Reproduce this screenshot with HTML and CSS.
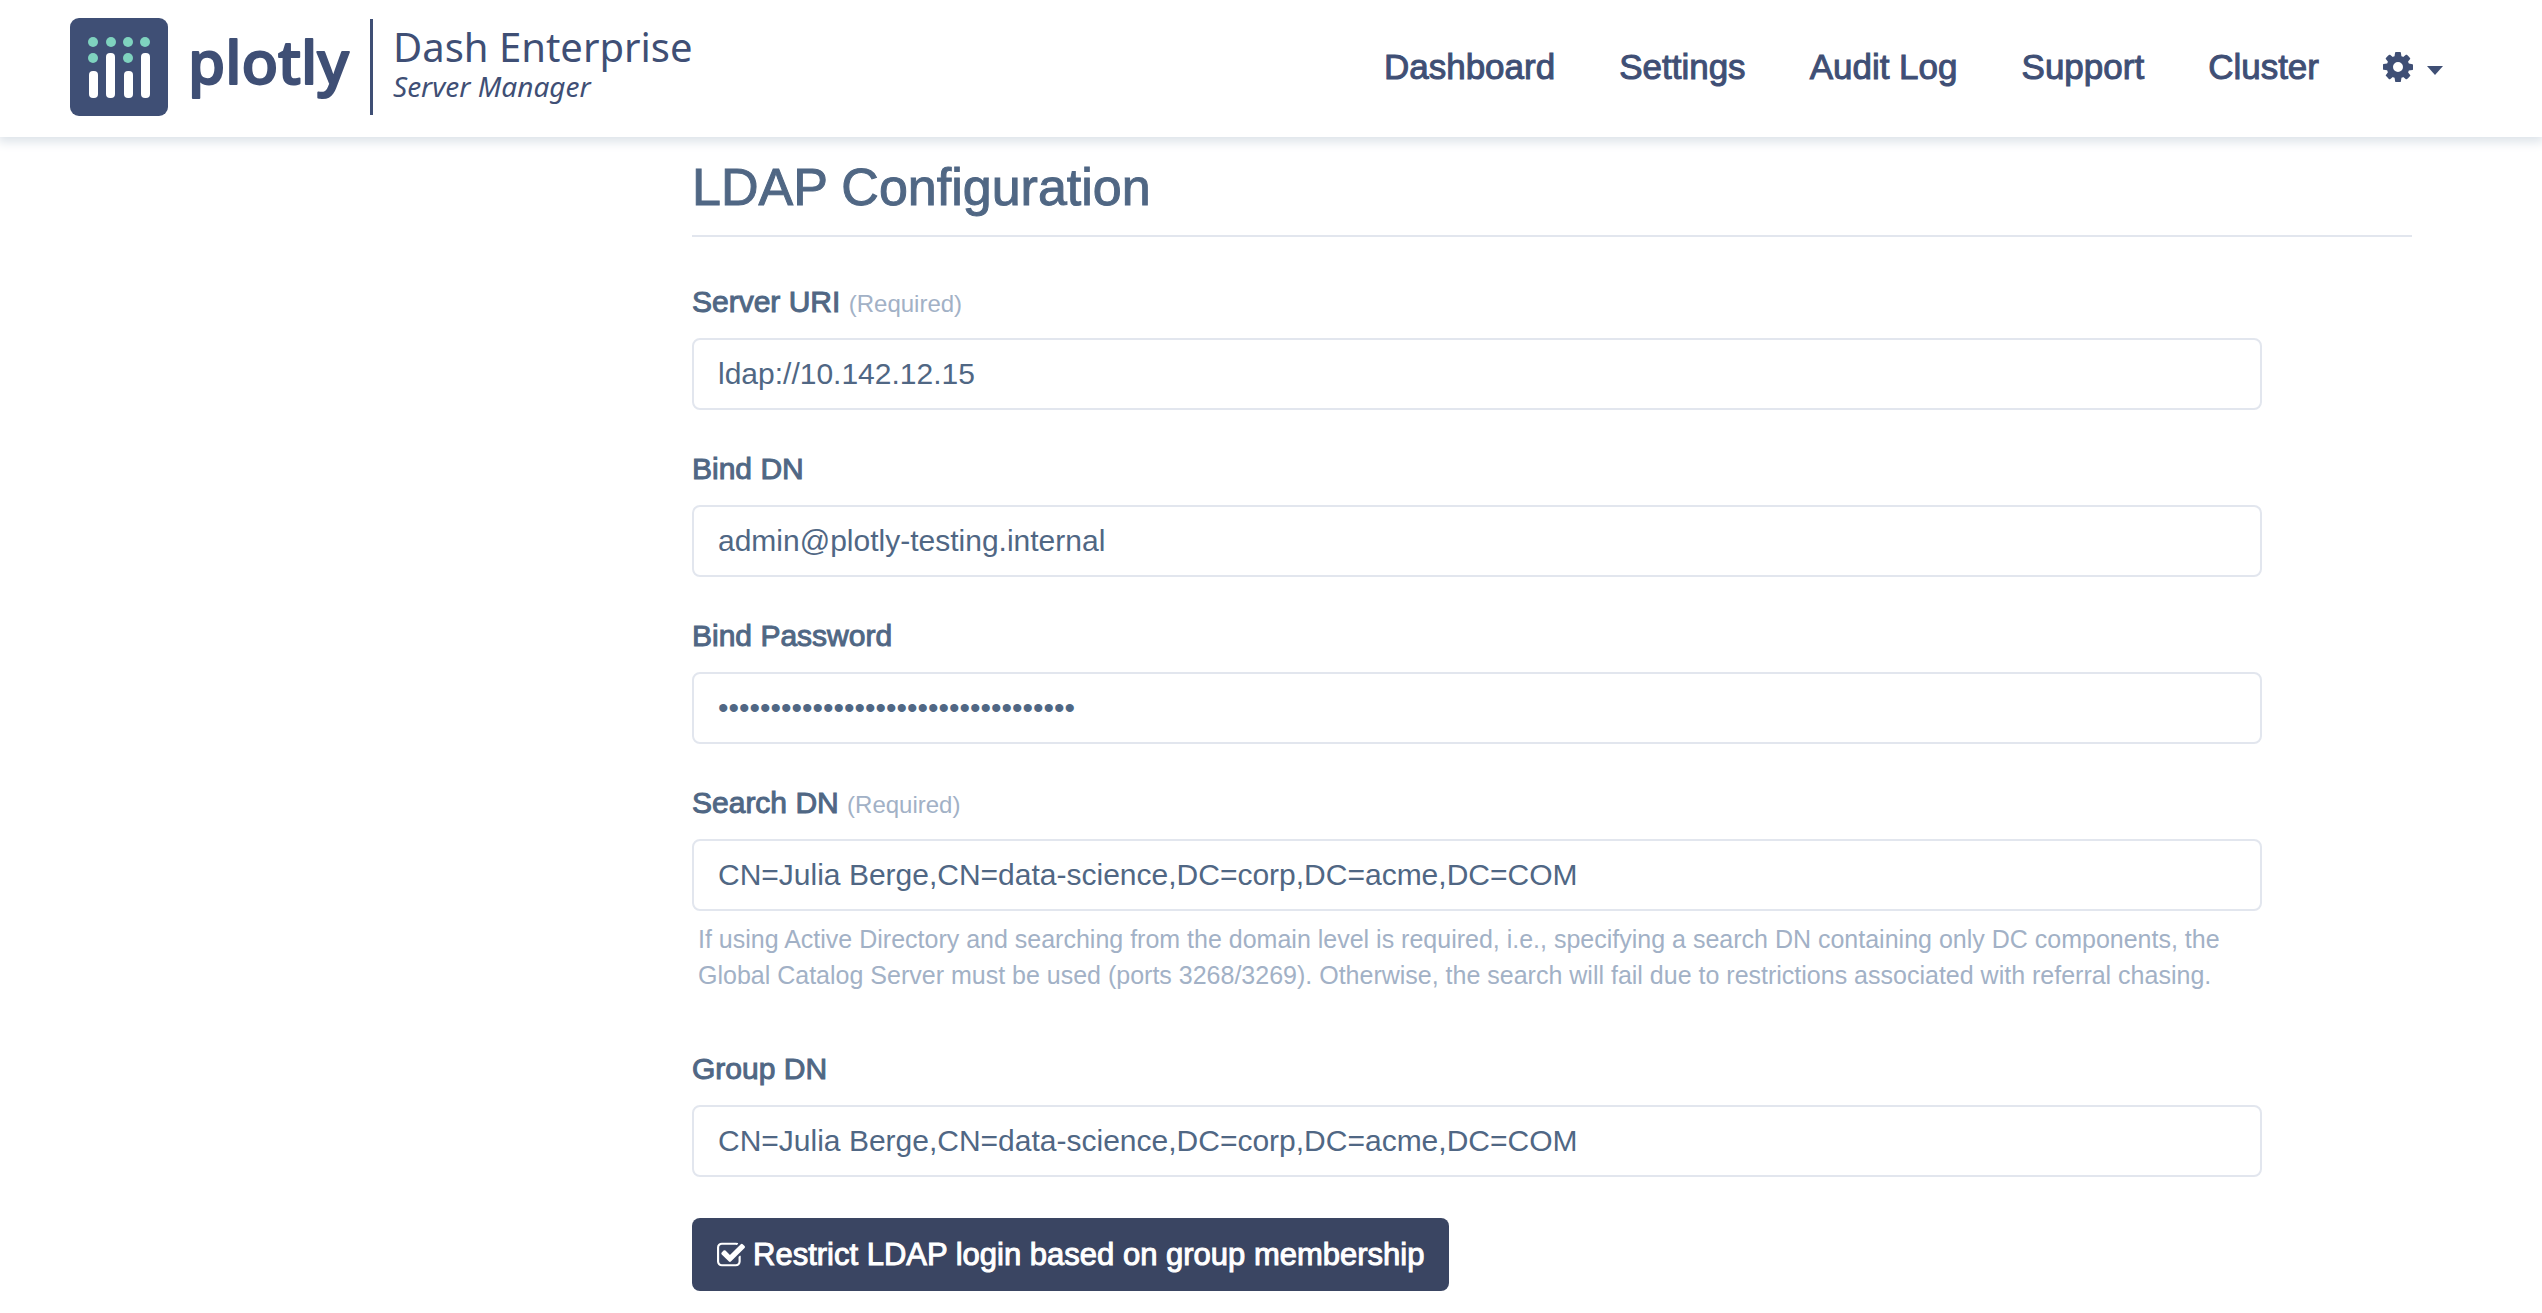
FILE: index.html
```html
<!DOCTYPE html>
<html lang="en">
<head>
    <meta charset="UTF-8">
    <meta name="viewport" content="width=device-width, initial-scale=1.0">
    <title>Dash Enterprise Server Manager</title>
    <link rel="stylesheet" href="styles.css">
</head>
<body>
    <header class="navbar">
        <a href="#" class="brand">
            <svg class="brand-mark" viewBox="0 0 98 98" aria-hidden="true">
                <rect width="98" height="98" rx="9" fill="#3f4f75"/>
                <g fill="#7fd3bf">
                    <circle cx="23" cy="24" r="5"/>
                    <circle cx="41" cy="24" r="5"/>
                    <circle cx="58" cy="24" r="5"/>
                    <circle cx="75" cy="24" r="5"/>
                    <circle cx="23" cy="40" r="5"/>
                    <circle cx="58" cy="40" r="5"/>
                </g>
                <g fill="#fff">
                    <rect x="19" y="53" width="9" height="27" rx="4"/>
                    <rect x="36" y="35" width="9" height="45" rx="4"/>
                    <rect x="54" y="53" width="9" height="27" rx="4"/>
                    <rect x="71" y="35" width="9" height="45" rx="4"/>
                </g>
            </svg>
            <svg class="brand-word" viewBox="0 0 164 98">
                <text x="0" y="66">plotly</text>
            </svg>
            <span class="brand-product">
                <span class="brand-name">Dash Enterprise</span>
                <span class="brand-sub">Server Manager</span>
            </span>
        </a>
        <nav class="nav">
            <a href="#">Dashboard</a>
            <a href="#">Settings</a>
            <a href="#">Audit Log</a>
            <a href="#">Support</a>
            <a href="#">Cluster</a>
            <button type="button" class="nav-menu" aria-label="Options">
                <svg class="icon-cog" viewBox="0 -128 1536 1536" fill="currentColor">
                    <path d="M1024 640q0-106-75-181t-181-75-181 75-75 181 75 181 181 75 181-75 75-181zm512-109v222q0 12-8 23t-20 13l-185 28q-19 54-39 91 35 50 107 138 10 12 10 25t-9 23q-27 37-99 108t-94 71q-12 0-26-9l-138-108q-44 23-91 38-16 136-29 186-7 28-36 28h-222q-14 0-24.5-8.5t-11.5-21.5l-28-184q-49-16-90-37l-141 107q-10 9-25 9-14 0-25-11-126-114-165-168-7-10-7-23 0-12 8-23 15-21 51-66.5t54-70.5q-27-50-41-99l-183-27q-13-2-21-12.5t-8-23.5v-222q0-12 8-23t19-13l186-28q14-46 39-92-40-57-107-138-10-12-10-24 0-10 9-23 26-36 98.5-107.5t94.5-71.5q13 0 26 10l138 107q44-23 91-38 16-136 29-186 7-28 36-28h222q14 0 24.5 8.5t11.5 21.5l28 184q49 16 90 37l142-107q9-9 24-9 13 0 25 10 129 119 165 170 7 8 7 22 0 12-8 23-15 21-51 66.5t-54 70.5q26 50 41 98l183 28q13 2 21 12.5t8 23.5z"/>
                </svg>
                <svg class="icon-caret" viewBox="0 0 16 9" fill="currentColor">
                    <path d="M0 0h16L8 9z"/>
                </svg>
            </button>
        </nav>
    </header>

    <main class="page">
        <h1>LDAP Configuration</h1>
        <form class="settings">
            <div class="field">
                <label for="serverUri">Server URI <small>(Required)</small></label>
                <input type="text" id="serverUri" value="ldap://10.142.12.15">
            </div>
            <div class="field">
                <label for="bindDn">Bind DN</label>
                <input type="text" id="bindDn" value="admin@plotly-testing.internal">
            </div>
            <div class="field">
                <label for="bindPassword">Bind Password</label>
                <input type="password" id="bindPassword" value="0000000000000000000000000000000000">
            </div>
            <div class="field field-with-help">
                <label for="searchDn">Search DN <small>(Required)</small></label>
                <input type="text" id="searchDn" value="CN=Julia Berge,CN=data-science,DC=corp,DC=acme,DC=COM">
                <p class="help">If using Active Directory and searching from the domain level is required, i.e., specifying a search DN containing only DC components, the Global Catalog Server must be used (ports 3268/3269). Otherwise, the search will fail due to restrictions associated with referral chasing.</p>
            </div>
            <div class="field">
                <label for="groupDn">Group DN</label>
                <input type="text" id="groupDn" value="CN=Julia Berge,CN=data-science,DC=corp,DC=acme,DC=COM">
            </div>
            <button type="button" class="toggle" aria-pressed="true">
                <svg class="icon-check" viewBox="64 96 1664 1472" fill="currentColor" aria-hidden="true">
                    <path d="M1472 930v318q0 119-84.5 203.5t-203.5 84.5h-832q-119 0-203.5-84.5t-84.5-203.5v-832q0-119 84.5-203.5t203.5-84.5h832q63 0 117 25 15 7 18 23 3 17-9 29l-49 49q-10 10-23 10-3 0-9-2-23-6-45-6h-832q-66 0-113 47t-47 113v832q0 66 47 113t113 47h832q66 0 113-47t47-113v-254q0-13 9-22l64-64q10-10 23-10 6 0 12 3 20 8 20 29zm231-489l-814 814q-24 24-57 24t-57-24l-430-430q-24-24-24-57t24-57l110-110q24-24 57-24t57 24l263 263 647-647q24-24 57-24t57 24l110 110q24 24 24 57t-24 57z"/>
                </svg>
                Restrict LDAP login based on group membership
            </button>
        </form>
    </main>
</body>
</html>
```
FILE: styles.css
```css
* {
    box-sizing: border-box;
}
body {
    margin: 0;
    font-family: "Liberation Sans", Arial, sans-serif;
    font-size: 30px;
    color: #506784;
    background-color: #fff;
}
.navbar {
    display: flex;
    justify-content: space-between;
    align-items: center;
    height: 137px;
    padding: 0 99px 4px 70px;
    box-shadow: 0 3px 10px 2px #dde3e9;
}
.brand {
    display: flex;
    align-items: center;
    color: #3f4f75;
    text-decoration: none;
}
.brand-mark {
    width: 98px;
    height: 98px;
    margin-right: 20px;
}
.brand-word {
    width: 164px;
    height: 98px;
    margin-right: 18px;
}
.brand-word text {
    font-family: "Noto Sans", sans-serif;
    font-size: 60px;
    font-weight: 500;
    fill: #3f4f75;
    stroke: #3f4f75;
    stroke-width: 2px;
    stroke-linejoin: round;
}
.brand-product {
    display: flex;
    flex-direction: column;
    height: 96px;
    padding: 5px 0 0 20px;
    border-left: 3px solid #3f4f75;
    font-family: "Noto Sans", sans-serif;
}
.brand-name {
    font-size: 40px;
    line-height: 46px;
}
.brand-sub {
    font-size: 28px;
    line-height: 32px;
    font-style: italic;
}
.nav {
    display: flex;
    align-items: center;
    gap: 64px;
    color: #3f4f75;
}
.nav a {
    font-size: 35px;
    line-height: 42px;
    color: inherit;
    text-decoration: none;
    -webkit-text-stroke: 1px;
}
.nav-menu {
    display: flex;
    align-items: center;
    gap: 14px;
    padding: 0;
    border: none;
    background: none;
    color: inherit;
    cursor: pointer;
}
.icon-cog {
    width: 30px;
    height: 30px;
}
.icon-caret {
    width: 16px;
    height: 9px;
    margin-top: 8px;
}
.page {
    padding: 20px 130px 23px 692px;
}
h1 {
    margin: 0 0 45px;
    padding-bottom: 18px;
    border-bottom: 2px solid #e2e6ee;
    font-size: 52px;
    line-height: 60px;
    font-weight: normal;
    -webkit-text-stroke: 1px;
}
.settings {
    padding-right: 150px;
}
.field {
    margin-bottom: 39px;
}
.field-with-help {
    margin-bottom: 56px;
}
label {
    display: block;
    margin-bottom: 17px;
    font-size: 30px;
    line-height: 39px;
    -webkit-text-stroke: 1px;
}
label small {
    font-size: 24px;
    line-height: 24px;
    color: #a2b1c6;
    -webkit-text-stroke: 0;
}
input {
    display: block;
    width: 100%;
    height: 72px;
    padding: 0 24px;
    border: 2px solid #e2e6ee;
    border-radius: 8px;
    font-family: inherit;
    font-size: 30px;
    color: #506784;
    background-color: #fff;
}
.help {
    margin: 10px 0 0;
    padding: 0 6px;
    font-size: 25px;
    line-height: 36px;
    color: #a2b1c6;
}
.toggle {
    display: flex;
    align-items: center;
    gap: 8px;
    height: 73px;
    margin-top: 41px;
    padding: 0 25px;
    border: none;
    border-radius: 8px;
    font-family: inherit;
    font-size: 31px;
    color: #fff;
    background-color: #3a4562;
    -webkit-text-stroke: 1px;
    cursor: pointer;
}
.icon-check {
    width: 28px;
    height: 25px;
}
```
